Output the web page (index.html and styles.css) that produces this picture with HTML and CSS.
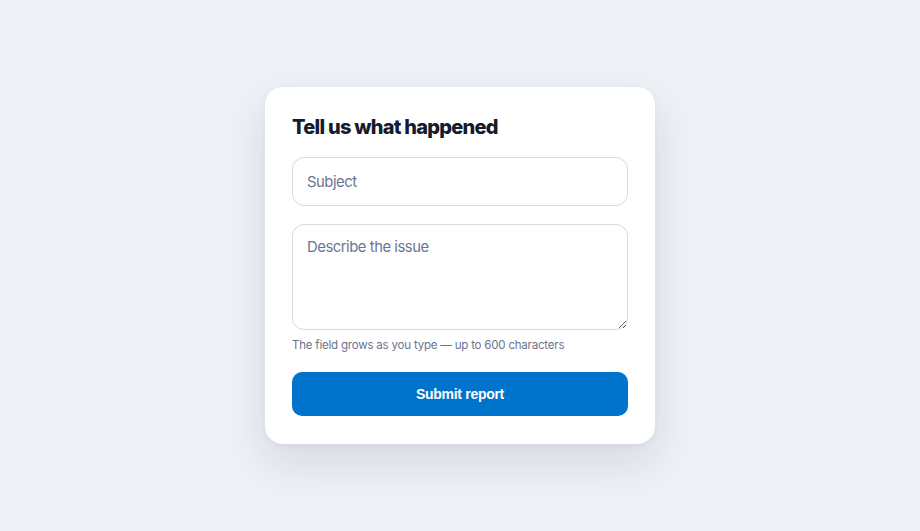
FILE: index.html
```html
<!DOCTYPE html>
<html lang="en">
<head>
<meta charset="utf-8">
<title>Report</title>
<link rel="stylesheet" href="styles.css">
</head>
<body>
<main class="page">
  <form class="card">
    <h1 class="title">Tell us what happened</h1>
    <input class="field" type="text" placeholder="Subject">
    <textarea class="field area" placeholder="Describe the issue"></textarea>
    <p class="hint">The field grows as you type — up to 600 characters</p>
    <button class="submit" type="button">Submit report</button>
  </form>
</main>
</body>
</html>
```
FILE: styles.css
```css
* { box-sizing: border-box; }
html, body { margin: 0; padding: 0; }
body {
  background: #edf0f5;
  font-family: Inter, "Noto Sans", sans-serif;
}
.page {
  height: 100vh;
  display: flex;
  align-items: center;
  justify-content: center;
}
.card {
  width: 390px;
  background: #ffffff;
  border-radius: 18px;
  padding: 25px 27px 28px;
  display: flex;
  flex-direction: column;
  box-shadow: 0 18px 40px rgba(30, 40, 80, 0.11), 0 2px 6px rgba(30, 40, 80, 0.04);
}
.title {
  margin: 0 0 15px;
  font-size: 20px;
  line-height: 30px;
  font-weight: 800;
  letter-spacing: -0.75px;
  color: #151b2c;
}
.field {
  display: block;
  width: 100%;
  height: 49px;
  border: 1px solid #d6d9e4;
  border-radius: 12px;
  padding: 0 14px;
  font-family: Inter, "Noto Sans", sans-serif;
  font-size: 14.8px;
  letter-spacing: -0.45px;
  color: #151b2c;
  background: #fff;
  outline: none;
}
.field::placeholder { color: #6b7592; }
.area {
  margin-top: 18px;
  height: 106px;
  padding: 13px 14px;
  line-height: 19px;
  resize: vertical;
}
.hint {
  margin: 7px 0 0;
  font-size: 11.5px;
  letter-spacing: -0.2px;
  line-height: 16px;
  color: #6b7390;
}
.submit {
  margin-top: 19px;
  height: 44px;
  border: none;
  border-radius: 10px;
  background: #0074cc;
  color: #ffffff;
  font-family: "Liberation Sans", Arial, sans-serif;
  font-size: 14px;
  letter-spacing: -0.3px;
  font-weight: 700;
  cursor: pointer;
}
```
